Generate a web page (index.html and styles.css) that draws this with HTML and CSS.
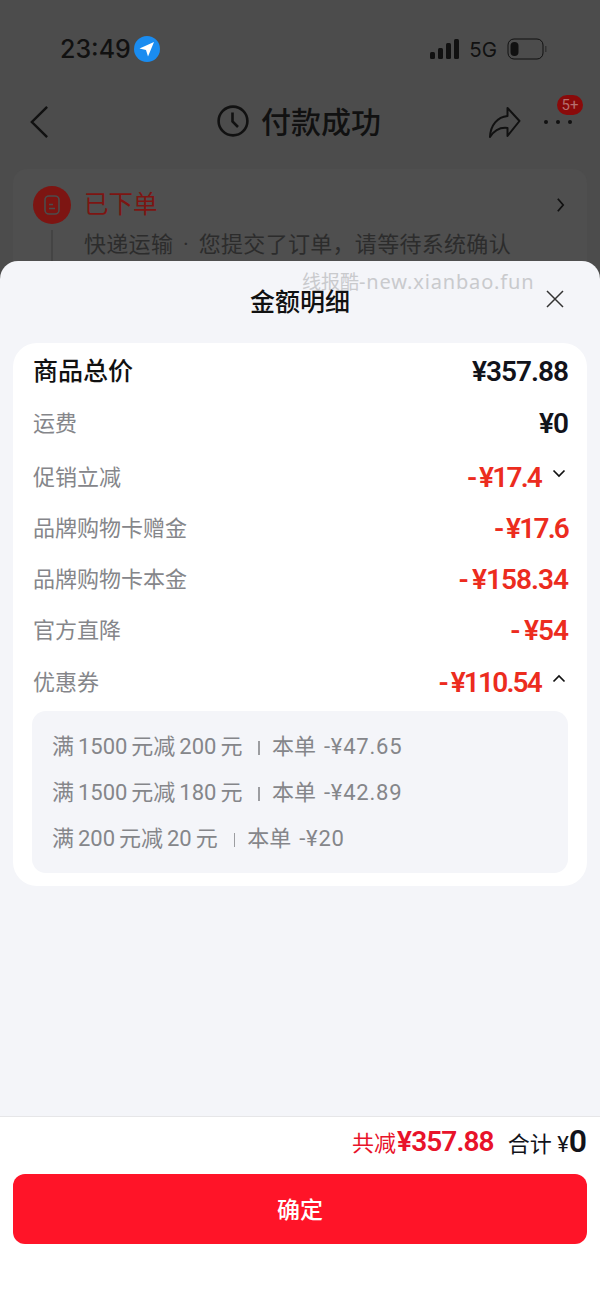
FILE: index.html
```html
<!DOCTYPE html>
<html>
<head>
  <title>金额明细</title>
  <link rel="stylesheet" href="styles.css">
</head>
<body>
  <div class="page">
    <div class="behind">
      <div class="status-bar">
        <div class="status-left">
          <span class="clock">23:49</span>
          <svg class="loc" viewBox="0 0 26 26">
            <circle cx="13" cy="13" r="13" fill="#1a8cf0"/>
            <path d="M20 6 L5.5 12.5 L12 14 L14 20.5 Z" fill="#fff"/>
          </svg>
        </div>
        <div class="status-right">
          <svg class="signal" viewBox="0 0 30 20">
            <rect x="0" y="13" width="5" height="7" rx="1.5"/>
            <rect x="8" y="9" width="5" height="11" rx="1.5"/>
            <rect x="16" y="4" width="5" height="16" rx="1.5"/>
            <rect x="24" y="0" width="5" height="20" rx="1.5"/>
          </svg>
          <span class="net">5G</span>
          <svg class="battery" viewBox="0 0 40 22">
            <rect x="1" y="1" width="35" height="20" rx="6" fill="none" stroke="#111" stroke-width="1"/>
            <rect x="3.5" y="4" width="8" height="14" rx="4" fill="#111"/>
            <rect x="38" y="8" width="1.5" height="6" fill="#333"/>
          </svg>
        </div>
      </div>

      <div class="nav-bar">
        <svg class="back" viewBox="0 0 20 36">
          <path d="M18 2 L2 18 L18 34" fill="none" stroke="#111" stroke-width="2.6"/>
        </svg>
        <div class="nav-title">
          <svg class="clock-icon" viewBox="0 0 32 32">
            <circle cx="16" cy="16" r="14.4" fill="none" stroke="#111" stroke-width="2.6"/>
            <path d="M15.5 7.5 V16.5 L21 22" fill="none" stroke="#111" stroke-width="2.6"/>
          </svg>
          <span>付款成功</span>
        </div>
        <div class="nav-actions">
          <svg class="share" viewBox="0 0 32 32">
            <path d="M19 2 L31 15 L19 30 V22 C11 21 6 24 1.5 31 C2 19 9 11 19 10 Z" fill="none" stroke="#111" stroke-width="2" stroke-linejoin="round"/>
          </svg>
          <div class="more">
            <i></i><i></i><i></i>
            <span class="badge">5+</span>
          </div>
        </div>
      </div>

      <div class="order-card">
        <div class="order-head">
          <div class="order-icon">
            <svg viewBox="0 0 16 20">
              <rect x="1" y="1" width="14" height="18" rx="4" fill="none" stroke="#4c4c4c" stroke-width="1.6"/>
              <path d="M5 9.5 H9 M5 13.5 H11" stroke="#4c4c4c" stroke-width="1.6"/>
            </svg>
          </div>
          <span class="order-state">已下单</span>
          <svg class="order-arrow" viewBox="0 0 10 18">
            <path d="M2 2 L8 9 L2 16" fill="none" stroke="#111" stroke-width="2"/>
          </svg>
        </div>
        <div class="order-desc">快递运输 · 您提交了订单，请等待系统确认</div>
      </div>
    </div>

    <div class="sheet">
      <div class="watermark">线报酷<span>-new.xianbao.fun</span></div>
      <div class="sheet-head">
        <h1>金额明细</h1>
        <svg class="close" viewBox="0 0 18 18">
          <path d="M1 1 L17 17 M17 1 L1 17" fill="none" stroke="#333" stroke-width="1.5"/>
        </svg>
      </div>

      <div class="detail-card">
        <div class="row row-total">
          <span class="label">商品总价</span>
          <span class="amount">¥357.88</span>
        </div>
        <div class="row row-free">
          <span class="label">运费</span>
          <span class="amount">¥0</span>
        </div>
        <div class="row">
          <span class="label">促销立减</span>
          <span class="amount red tight">- ¥17.4</span>
          <svg class="fold" viewBox="0 0 14 9"><path d="M1.5 1.5 L7 7 L12.5 1.5" fill="none" stroke="#111" stroke-width="1.7"/></svg>
        </div>
        <div class="row">
          <span class="label">品牌购物卡赠金</span>
          <span class="amount red tight">- ¥17.6</span>
        </div>
        <div class="row">
          <span class="label">品牌购物卡本金</span>
          <span class="amount red">- ¥158.34</span>
        </div>
        <div class="row">
          <span class="label">官方直降</span>
          <span class="amount red">- ¥54</span>
        </div>
        <div class="row">
          <span class="label">优惠券</span>
          <span class="amount red tight">- ¥110.54</span>
          <svg class="fold" viewBox="0 0 14 9"><path d="M1.5 7.5 L7 2 L12.5 7.5" fill="none" stroke="#111" stroke-width="1.7"/></svg>
        </div>
        <div class="coupons">
          <div class="coupon">满 1500 元减 200 元<i class="sep"></i>本单<span class="off">-¥47.65</span></div>
          <div class="coupon">满 1500 元减 180 元<i class="sep"></i>本单<span class="off">-¥42.89</span></div>
          <div class="coupon">满 200 元减 20 元<i class="sep"></i>本单<span class="off">-¥20</span></div>
        </div>
      </div>

      <div class="footer">
        <div class="summary">
          <span class="saved">共减<b>¥357.88</b></span>
          <span class="sum">合计 ¥<b>0</b></span>
        </div>
        <button class="confirm">确定</button>
      </div>
    </div>
  </div>
</body>
</html>
```

FILE: styles.css
```css
* {
  box-sizing: border-box;
}
body {
  margin: 0;
  background-color: #4c4c4c;
  font-family: "Roboto", "Noto Sans CJK SC", sans-serif;
}
.page {
  width: 600px;
  height: 1304px;
  display: flex;
  flex-direction: column;
  overflow: hidden;
}

/* page behind the sheet */
.behind {
  height: 261px;
  overflow: hidden;
  color: #111;
}
.status-bar {
  height: 98px;
  padding: 34px 53px 0 60px;
  display: flex;
  justify-content: space-between;
  align-items: flex-start;
}
.status-left, .status-right {
  display: flex;
  align-items: center;
  height: 30px;
}
.clock {
  font-family: "Inter", sans-serif;
  font-size: 25px;
  font-weight: 500;
}
.loc {
  width: 26px;
  height: 26px;
  margin-left: 3px;
}
.signal {
  width: 30px;
  height: 20px;
  fill: #111;
}
.net {
  font-family: "Inter", sans-serif;
  font-size: 20.5px;
  margin-left: 9px;
}
.battery {
  width: 40px;
  height: 22px;
  margin-left: 10px;
}
.nav-bar {
  height: 48px;
  padding: 0 28px 0 30px;
  display: flex;
  align-items: center;
  position: relative;
}
.back {
  width: 19px;
  height: 36px;
}
.nav-title {
  position: absolute;
  left: 217px;
  top: -2px;
  height: 48px;
  display: flex;
  align-items: center;
  gap: 12px;
  font-size: 30px;
  font-weight: 500;
}
.clock-icon {
  width: 32px;
  height: 32px;
  margin-top: 2px;
}
.nav-actions {
  margin-left: auto;
  display: flex;
  align-items: center;
  gap: 23px;
}
.share {
  width: 33px;
  height: 32px;
}
.more {
  position: relative;
  display: flex;
  gap: 8px;
  width: 28px;
}
.more i {
  width: 4px;
  height: 4px;
  border-radius: 50%;
  background-color: #111;
}
.badge {
  position: absolute;
  top: -25px;
  right: -11px;
  width: 26px;
  height: 20px;
  border-radius: 10px;
  background-color: #8a0a0a;
  color: #b5706f;
  font-size: 15px;
  line-height: 20px;
  text-align: center;
}
.order-card {
  margin: 23px 13px 0;
  height: 120px;
  padding: 17px 20px;
  background-color: #4f4f4f;
  border-radius: 14px;
}
.order-head {
  display: flex;
  align-items: center;
  height: 38px;
}
.order-icon {
  width: 38px;
  height: 38px;
  border-radius: 50%;
  background-color: #7d1512;
  display: flex;
  align-items: center;
  justify-content: center;
}
.order-icon svg {
  width: 16px;
  height: 20px;
}
.order-state {
  margin-left: 13px;
  font-size: 24.5px;
  line-height: 38px;
  color: #7d1512;
}
.order-arrow {
  margin-left: auto;
  margin-right: 2px;
  width: 9px;
  height: 16px;
}
.order-desc {
  margin-top: 6px;
  margin-left: 18px;
  padding-left: 31px;
  height: 38px;
  border-left: 2px solid #444;
  font-size: 22px;
  line-height: 30px;
  letter-spacing: 0.3px;
  word-spacing: 4px;
  color: #2c2c2c;
  white-space: nowrap;
}

/* bottom sheet */
.sheet {
  flex: 1;
  position: relative;
  display: flex;
  flex-direction: column;
  background-color: #f4f5f9;
  border-radius: 18px 18px 0 0;
}
.watermark {
  position: absolute;
  left: 302px;
  top: 8px;
  font-size: 19px;
  line-height: 26px;
  color: #c9cacd;
  white-space: nowrap;
}
.watermark span {
  font-family: "Noto Sans", sans-serif;
  font-size: 20px;
  letter-spacing: 0.85px;
}
.sheet-head {
  height: 82px;
  position: relative;
  display: flex;
  justify-content: center;
  align-items: center;
}
.sheet-head h1 {
  margin: 0;
  padding-bottom: 4px;
  font-size: 25px;
  font-weight: 500;
  color: #111;
}
.close {
  position: absolute;
  left: 546px;
  top: 29px;
  width: 18px;
  height: 18px;
}
.detail-card {
  margin: 0 13px;
  padding: 0 19px 12px 20px;
  height: 543px;
  background-color: white;
  border-radius: 24px;
}
.row {
  height: 51.25px;
  display: flex;
  align-items: center;
}
.row-total {
  height: 52px;
}
.row-free {
  height: 52px;
  margin-bottom: 2px;
}
.label {
  margin-right: auto;
  font-size: 22px;
  color: #85868a;
}
.amount {
  padding-top: 5px;
  font-size: 28px;
  font-weight: 600;
  color: #12131a;
  letter-spacing: -1px;
  word-spacing: -1.5px;
}
.red {
  color: #ec2c1e;
}
.tight {
  letter-spacing: -1.8px;
}
.row-total .label {
  font-size: 25px;
  font-weight: 500;
  color: #111;
}
.fold {
  width: 14px;
  height: 9px;
  margin: 0 2px 2px 11px;
}
.coupons {
  margin: 6px 0 0 -1px;
  height: 162px;
  padding: 13px 20px;
  background-color: #f4f5f9;
  border-radius: 14px;
}
.coupon {
  height: 46px;
  line-height: 46px;
  font-size: 22px;
  word-spacing: -1.5px;
  color: #85868a;
  white-space: nowrap;
}
.sep {
  display: inline-block;
  width: 1.5px;
  height: 14px;
  margin: 0 12px 0 16px;
  vertical-align: -1px;
  background-color: #9c9da1;
}
.off {
  margin-left: 8px;
  letter-spacing: 0.8px;
}
.footer {
  margin-top: auto;
  height: 188px;
  padding: 0 13px;
  background-color: white;
  border-top: 1px solid #e6e6e8;
}
.summary {
  height: 48px;
  margin-bottom: 9px;
  display: flex;
  justify-content: flex-end;
  align-items: center;
  gap: 14px;
}
.saved {
  font-size: 22px;
  color: #e8132a;
}
.saved b {
  margin-left: 1px;
  font-size: 28px;
  font-weight: 600;
  letter-spacing: -0.9px;
}
.sum {
  font-size: 22px;
  color: #12131a;
}
.sum b {
  font-size: 32px;
  font-weight: 600;
}
.confirm {
  display: block;
  width: 100%;
  height: 70px;
  padding-bottom: 4px;
  border: none;
  border-radius: 12px;
  background-color: #ff1428;
  color: white;
  font-family: "Noto Sans CJK SC", sans-serif;
  font-size: 23px;
  font-weight: 500;
}
```
